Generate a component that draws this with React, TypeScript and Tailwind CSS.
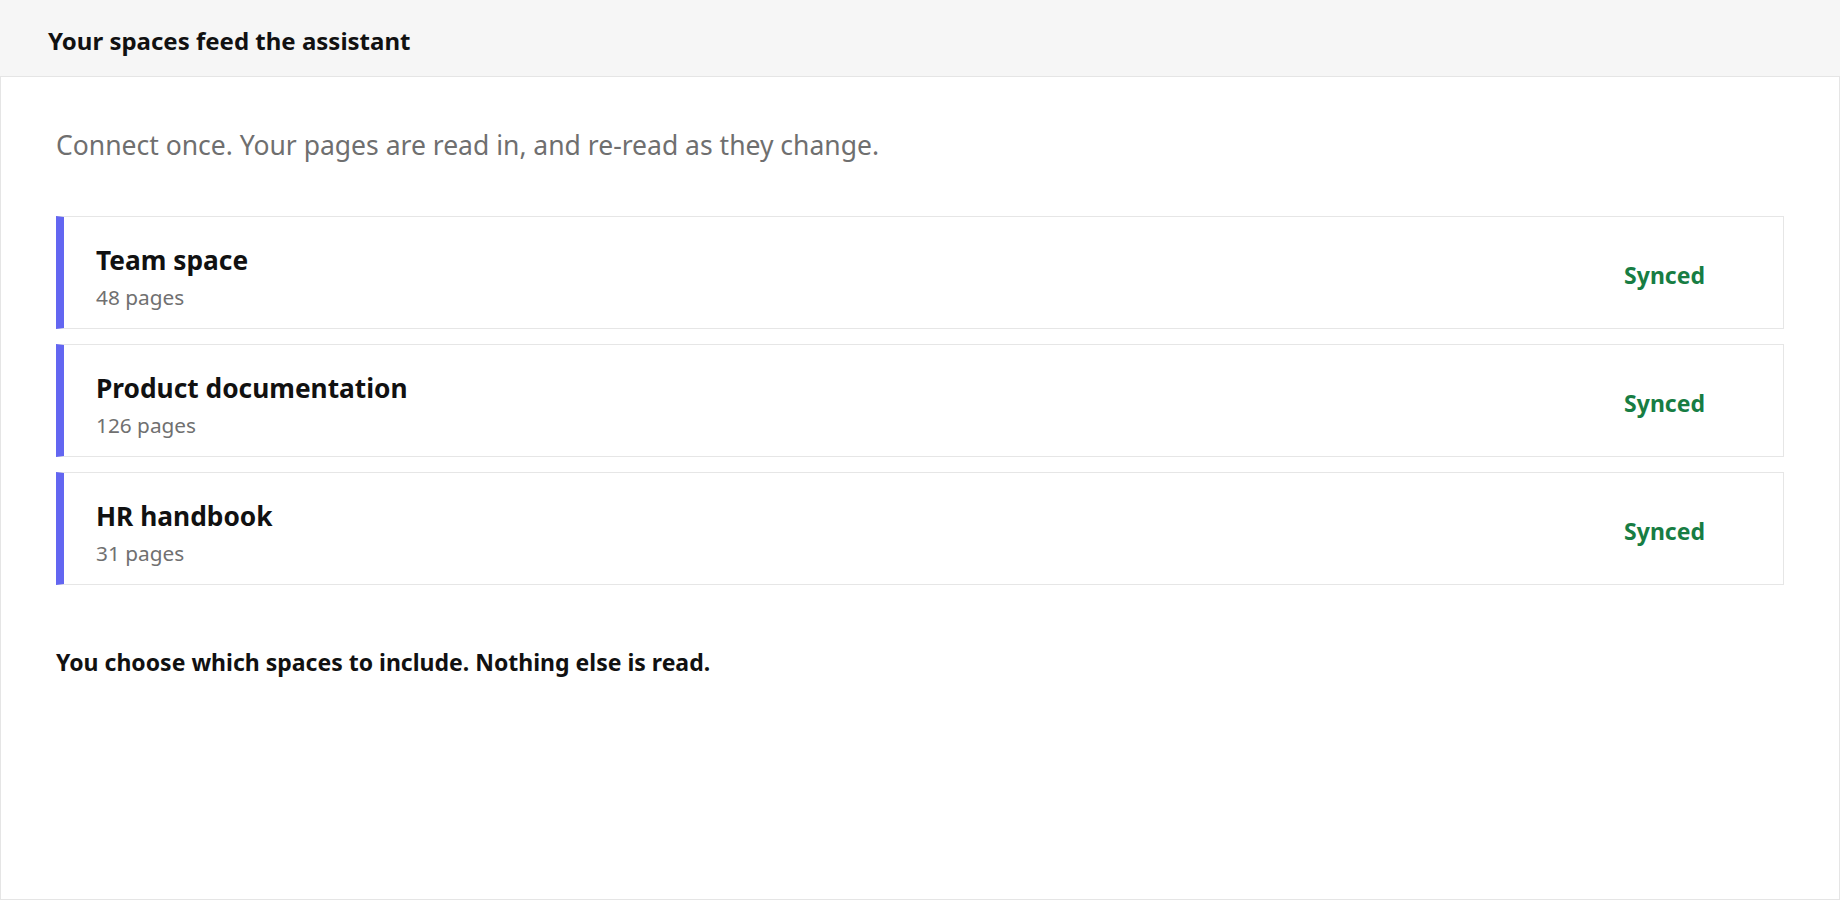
import React from 'react';

interface Space {
  name: string;
  pages: number;
}

const spaces: Space[] = [
  { name: 'Team space', pages: 48 },
  { name: 'Product documentation', pages: 126 },
  { name: 'HR handbook', pages: 31 },
];

const SpaceRow: React.FC<{ space: Space }> = ({ space }) => (
  <div className="flex items-center justify-between border border-[#e6e6e6] border-l-[8px] border-l-[#6366f1] bg-white pl-[32px] pr-[78px] pt-[27px] pb-[19px]">
    <div className="flex flex-col">
      <span className="text-[26.3px] leading-[32px] font-bold text-[#111111]">{space.name}</span>
      <span className="mt-[9px] text-[20.8px] leading-[24px] text-[#707070]">{space.pages} pages</span>
    </div>
    <span className="mb-[4px] text-[23px] leading-[28px] font-bold text-[#177d43]">Synced</span>
  </div>
);

const App: React.FC = () => {
  return (
    <div className="flex h-screen flex-col bg-white font-['Noto_Sans',sans-serif]">
      <header className="flex h-[76px] shrink-0 items-center bg-[#f6f6f6] px-[48px] pt-[6px]">
        <h1 className="text-[24px] leading-[30px] font-bold text-[#111111]">Your spaces feed the assistant</h1>
      </header>
      <main className="flex-1 border border-[#e5e5e5] bg-white px-[55px] pt-[51px]">
        <p className="text-[26.5px] leading-[34px] text-[#6f6f6f]">
          Connect once. Your pages are read in, and re-read as they change.
        </p>
        <div className="mt-[54px] flex flex-col gap-[15px]">
          {spaces.map((s) => (
            <SpaceRow key={s.name} space={s} />
          ))}
        </div>
        <p className="mt-[63px] text-[23px] leading-[28px] font-bold text-[#111111]">
          You choose which spaces to include. Nothing else is read.
        </p>
      </main>
    </div>
  );
};

export default App;
